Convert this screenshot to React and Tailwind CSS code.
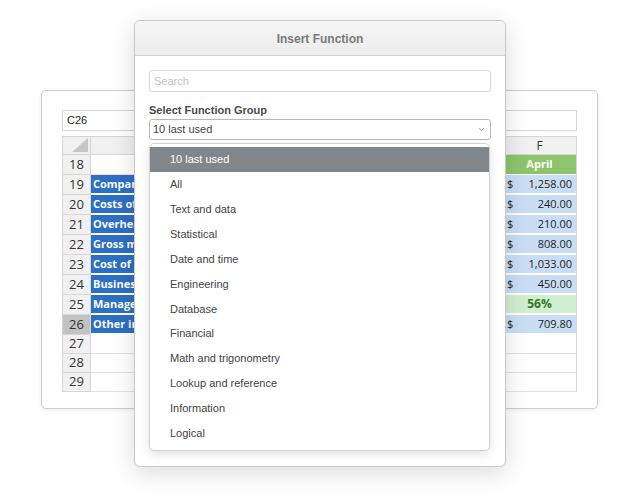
import React from "react";

const rows = [
  { n: 18, b: "", f: { type: "head", text: "April" } },
  { n: 19, b: "Company revenue", f: { type: "money", text: "1,258.00" } },
  { n: 20, b: "Costs of goods sold", f: { type: "money", text: "240.00" } },
  { n: 21, b: "Overhead costs", f: { type: "money", text: "210.00" } },
  { n: 22, b: "Gross margin", f: { type: "money", text: "808.00" } },
  { n: 23, b: "Cost of sales", f: { type: "money", text: "1,033.00" } },
  { n: 24, b: "Business expenses", f: { type: "money", text: "450.00" } },
  { n: 25, b: "Management fees", f: { type: "pct", text: "56%" } },
  { n: 26, b: "Other income", f: { type: "money", text: "709.80" }, sel: true },
  { n: 27, b: "", f: null, h: "h-[19px]" },
  { n: 28, b: "", f: null, h: "h-[19px]" },
  { n: 29, b: "", f: null, h: "h-[19px]" },
];

const items = [
  "10 last used",
  "All",
  "Text and data",
  "Statistical",
  "Date and time",
  "Engineering",
  "Database",
  "Financial",
  "Math and trigonometry",
  "Lookup and reference",
  "Information",
  "Logical",
];

function FCell({ f }) {
  if (!f)
    return <div className="w-[73px] h-full border-b border-[#e3e3e3] bg-white" />;
  if (f.type === "head")
    return (
      <div className="w-[73px] h-full border-b border-white bg-[#8dc56c] text-white font-bold text-[11px] flex items-center justify-center">
        {f.text}
      </div>
    );
  if (f.type === "pct")
    return (
      <div className="w-[73px] h-full border-b-2 border-white bg-[#d2eed0] text-[#2e7a23] font-bold text-[12px] flex items-center justify-center">
        {f.text}
      </div>
    );
  return (
    <div className="w-[73px] h-full border-b-2 border-white bg-[#c9def5] text-[#222] text-[11px] flex items-center justify-between pl-[4px] pr-[4px]">
      <span>$</span>
      <span>{f.text}</span>
    </div>
  );
}

export default function App() {
  return (
    <div className="relative w-[640px] h-[500px] bg-white overflow-hidden">
      {/* Spreadsheet card */}
      <div
        className="ml-[41px] mt-[90px] w-[557px] h-[319px] bg-white border border-[#cfcfcf] rounded-[5px] shadow-[0_1px_4px_rgba(0,0,0,0.08)] pt-[19px] px-[20px]"
        style={{ fontFamily: '"Open Sans", "DejaVu Sans", sans-serif' }}
      >
        <div className="h-[21px] border border-[#d6d6d6] flex items-center pl-[4px] text-[11px] text-[#222]" style={{ fontFamily: '"Liberation Sans", Arial, sans-serif' }}>
          C26
        </div>
        <div className="mt-[5px] border-l border-t border-r border-[#d6d6d6]">
          {/* header row */}
          <div className="flex h-[18px] bg-[#f1f1f1] border-b border-[#d6d6d6]">
            <div className="w-[28px] h-full border-r border-[#d6d6d6] relative">
              <div className="absolute right-[2px] bottom-[2px] w-0 h-0 border-l-[16px] border-l-transparent border-b-[14px] border-b-[#c6c6c6]" />
            </div>
            <div className="flex-1 h-full border-r border-[#d6d6d6]" />
            <div className="w-[73px] h-full flex items-center justify-center text-[12px] text-[#333]">F</div>
          </div>
          {rows.map((r) => (
            <div key={r.n} className={`flex ${r.h || "h-[20px]"}`}>
              <div
                className={`w-[28px] h-full border-r border-b border-[#d6d6d6] flex items-center justify-center text-[13px] text-[#333] ${
                  r.sel ? "bg-[#c2c2c2]" : "bg-[#f1f1f1]"
                }`}
              >
                {r.n}
              </div>
              {r.b ? (
                <div className="flex-1 h-full border-b-2 border-white bg-[#2d6fc3] text-white font-bold text-[11px] flex items-center pl-[2px]">
                  <span className="block w-[42px] overflow-hidden whitespace-nowrap">{r.b}</span>
                </div>
              ) : (
                <div className="flex-1 h-full border-b border-[#e3e3e3]" />
              )}
              <FCell f={r.f} />
            </div>
          ))}
        </div>
      </div>

      {/* Insert Function dialog */}
      <div
        className="absolute left-[134px] top-[20px] w-[372px] h-[447px] bg-white border border-[#cacaca] rounded-[6px] shadow-[0_6px_24px_rgba(0,0,0,0.14)] overflow-hidden"
        style={{ fontFamily: '"Liberation Sans", Arial, Helvetica, sans-serif' }}
      >
        <div className="h-[35px] bg-gradient-to-b from-[#f6f6f6] to-[#ececec] border-b border-[#d2d2d2] flex items-center justify-center pt-[1px] text-[12px] font-bold text-[#7a7a7a]">
          Insert Function
        </div>
        <div className="px-[14px] pt-[14px]">
          <div className="h-[22px] border border-[#d8d8d8] rounded-[3px] flex items-center pl-[4px] text-[11px] text-[#c2c2c2]">
            Search
          </div>
          <div className="mt-[11px] h-[15px] text-[11px] font-bold text-[#4a4a4a] leading-[15px]">
            Select Function Group
          </div>
          <div className="mt-[1px] h-[21px] border border-[#b8b8b8] rounded-[3px] flex items-center justify-between pl-[3px] pr-[5px] pb-[1px] text-[11px] text-[#444]">
            <span>10 last used</span>
            <svg width="7" height="5" viewBox="0 0 7 5" className="mt-[1px]">
              <path d="M1 1.2 L3.5 3.6 L6 1.2" fill="none" stroke="#9a9a9a" strokeWidth="0.9" />
            </svg>
          </div>
          <div className="mt-[3px] w-[341px] h-[308px] border border-[#d2d2d2] rounded-[5px] shadow-[0_3px_10px_rgba(0,0,0,0.12)] bg-white pt-[3px] overflow-hidden">
            {items.map((it, i) => (
              <div
                key={it}
                className={`h-[24.9px] flex items-center pl-[20px] text-[11px] ${
                  i === 0 ? "bg-[#7f878d] text-white" : "text-[#444]"
                }`}
              >
                {it}
              </div>
            ))}
          </div>
        </div>
      </div>
    </div>
  );
}
